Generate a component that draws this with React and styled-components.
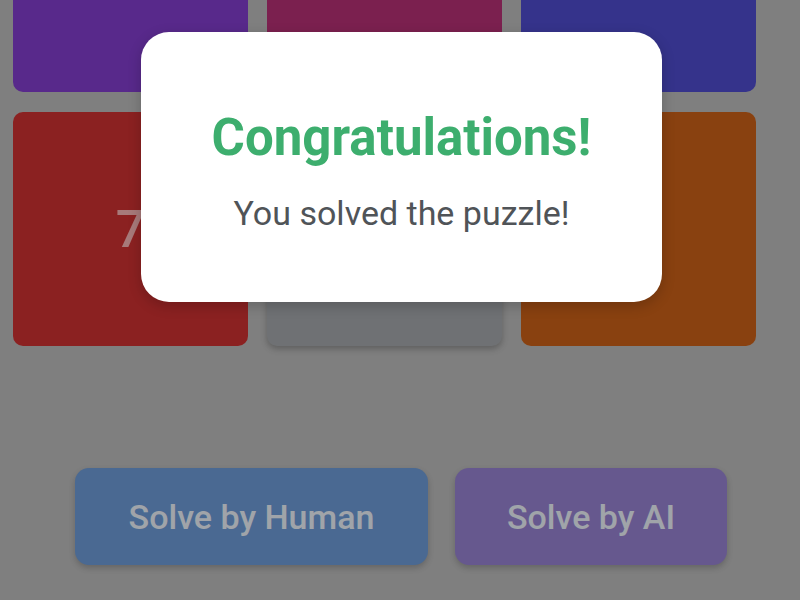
import React from "react";
import styled, { createGlobalStyle } from "styled-components";

const Global = createGlobalStyle`
  html, body { margin: 0; padding: 0; }
  body {
    width: 800px;
    height: 600px;
    overflow: hidden;
    background: #b6b6b6;
    font-family: Roboto, "Liberation Sans", sans-serif;
  }
`;

const Page = styled.div`
  position: relative;
  width: 800px;
  height: 600px;
  overflow: hidden;
  display: flex;
  flex-direction: column;
  align-items: flex-start;
`;

const Board = styled.div`
  display: grid;
  grid-template-columns: repeat(3, 235px);
  grid-auto-rows: 234px;
  gap: 20px 19px;
  margin-top: -142px;
  margin-left: 13px;
`;

const Tile = styled.div`
  border-radius: 10px;
  background: ${(p) => p.$color};
  display: flex;
  align-items: center;
  justify-content: center;
  font-size: 52px;
  font-weight: 500;
  color: rgba(255, 225, 225, 0.72);
  box-shadow: ${(p) => (p.$empty ? "0 3px 6px rgba(0,0,0,0.25)" : "none")};
`;

const Actions = styled.div`
  display: flex;
  gap: 27px;
  margin-top: 122px;
  margin-left: 75px;
`;

const Button = styled.button`
  width: ${(p) => p.$w}px;
  height: 97px;
  border: none;
  border-radius: 14px;
  background: ${(p) => p.$color};
  color: #e6ebf3;
  font-family: Roboto, "Liberation Sans", sans-serif;
  font-size: 34px;
  font-weight: 500;
  box-shadow: 0 3px 6px rgba(0, 0, 0, 0.2);
`;

const Overlay = styled.div`
  position: absolute;
  inset: 0;
  background: rgba(0, 0, 0, 0.3);
  display: flex;
  justify-content: center;
  align-items: flex-start;
  padding-top: 32px;
  padding-left: 3px;
`;

const Modal = styled.div`
  width: 521px;
  height: 270px;
  box-sizing: border-box;
  background: #ffffff;
  border-radius: 28px;
  display: flex;
  flex-direction: column;
  align-items: center;
  padding-top: 76px;
  box-shadow: 0 4px 14px rgba(0, 0, 0, 0.2);
`;

const Title = styled.h2`
  margin: 0;
  font-size: 51px;
  font-weight: 700;
  color: #3dae6e;
  line-height: 60px;
`;

const Message = styled.p`
  margin: 25px 0 0;
  font-size: 34px;
  font-weight: 400;
  color: #505458;
  line-height: 40px;
`;

const tiles = [
  { c: "#7e3cc8" },
  { c: "#b12e72" },
  { c: "#4c49c8" },
  { c: "#c83030", n: "7" },
  { c: "#a0a3a6", empty: true },
  { c: "#c55e17" },
];

export default function App() {
  return (
    <>
      <Global />
      <Page>
        <Board>
          {tiles.map((t, i) => (
            <Tile key={i} $color={t.c} $empty={t.empty}>
              {t.n}
            </Tile>
          ))}
        </Board>
        <Actions>
          <Button $w={353} $color="#6a97d1">Solve by Human</Button>
          <Button $w={272} $color="#927fcc">Solve by AI</Button>
        </Actions>
        <Overlay>
          <Modal>
            <Title>Congratulations!</Title>
            <Message>You solved the puzzle!</Message>
          </Modal>
        </Overlay>
      </Page>
    </>
  );
}
